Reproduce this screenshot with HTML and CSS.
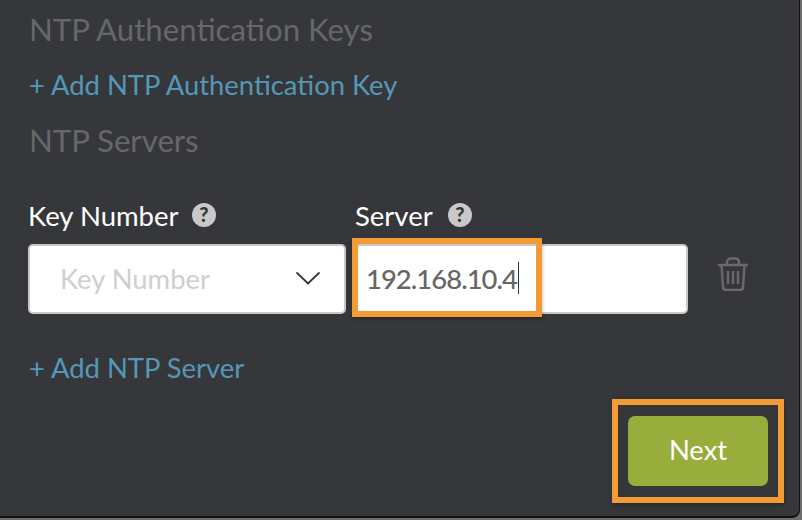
FILE: index.html
```html
<!DOCTYPE html>
<html lang="en">
<head>
<meta charset="utf-8">
<title>NTP Servers</title>
<link rel="stylesheet" href="styles.css">
</head>
<body>
<main class="window">
  <h2 class="section first">NTP Authentication Keys</h2>
  <a class="add add-key">+ Add NTP Authentication Key</a>
  <h2 class="section second">NTP Servers</h2>
  <div class="fields">
    <div class="field key-field">
      <div class="label"><span>Key Number</span>
        <svg class="help" viewBox="0 0 24 24"><circle cx="12" cy="12" r="12" fill="#c8c8c8"/><text x="12" y="18.500" text-anchor="middle" class="help-mark">?</text></svg>
      </div>
      <div class="box select"><span class="placeholder">Key Number</span>
        <svg class="chevron" viewBox="0 0 24 14"><path d="M.5 1.500 12 12.500 23.500 1.500" fill="none" stroke="#333" stroke-width="1.800"/></svg>
      </div>
    </div>
    <div class="field server-field">
      <div class="label"><span>Server</span>
        <svg class="help" viewBox="0 0 24 24"><circle cx="12" cy="12" r="12" fill="#c8c8c8"/><text x="12" y="18.500" text-anchor="middle" class="help-mark">?</text></svg>
      </div>
      <div class="box input"><span class="value">192.168.10.4</span><span class="caret"></span>
        <span class="highlight highlight-input"></span>
      </div>
    </div>
    <svg class="trash" viewBox="0 0 32 34" fill="none" stroke="#6a6a6a" stroke-width="2.400">
      <path d="M1 8H31M10 7V5.500C10 3 11.500 1.500 14 1.500H18C20.500 1.500 22 3 22 5.500V7"/>
      <path d="M4.500 8 6 30C6 31.800 7.200 33 9 33H23C24.800 33 26 31.800 26 30L27.500 8"/>
      <path d="M11 14V27M16 14V27M21 14V27"/>
    </svg>
  </div>
  <a class="add add-server">+ Add NTP Server</a>
  <div class="actions">
    <button class="next" type="button">Next<span class="highlight highlight-next"></span></button>
  </div>
</main>
</body>
</html>
```
FILE: styles.css
```css
* { box-sizing: border-box; }
html, body { margin: 0; height: 100%; }
body {
  width: 802px;
  height: 520px;
  overflow: hidden;
  background: #6e6e6e;
  font-family: Lato, "Open Sans", sans-serif;
}
.window {
  width: 800px;
  height: 518px;
  padding: 0 0 0 29px;
  background: #36373b;
  border-right: 1px solid #111;
  border-bottom: 2px solid #111;
  border-bottom-right-radius: 8px;
  overflow: hidden;
}
.section {
  margin: 0;
  font-size: 31.200px;
  line-height: 36px;
  font-weight: 400;
  color: #66676a;
}
.first { padding-top: 11px; height: 47px; }
.second { margin-top: 20px; }
.add {
  display: block;
  font-size: 27.400px;
  line-height: 34px;
  color: #5497b8;
}
.add-key { margin-top: 21px; }
.add-server { margin-top: 37px; }
.fields {
  display: flex;
  align-items: flex-end;
  margin-top: 39px;
  margin-left: -1px;
}
.field { display: flex; flex-direction: column; }
.key-field { width: 318px; }
.server-field { width: 334px; margin-left: 8px; }
.label {
  display: flex;
  align-items: center;
  gap: 13px;
  height: 36px;
  margin-left: 0;
  margin-bottom: 11px;
  font-size: 27.500px;
  color: #fff;
}
.server-field .label { margin-left: 1px; gap: 15px; }
.help { width: 24px; height: 24px; }
.help-mark {
  font: 900 20px Lato, sans-serif;
  fill: #36373b;
}
.box {
  position: relative;
  display: flex;
  align-items: center;
  height: 70px;
  padding-bottom: 2px;
  background: #fff;
  border: 2px solid #c8c8c8;
  border-radius: 5px;
  font-size: 27.400px;
}
.select { justify-content: space-between; padding-left: 30px; padding-right: 24px; }
.placeholder { color: #cfcfcf; }
.chevron { width: 24px; height: 14px; }
.input { padding-left: 10px; }
.value { color: #666; letter-spacing: -.95px; font-weight: 500; }
.caret { width: 1px; height: 32px; margin-left: 1px; background: #333; }
.highlight {
  position: absolute;
  border: 6px solid #f39b35;
  box-shadow: 0 2px 4px rgba(0, 0, 0, .3);
  pointer-events: none;
}
.highlight-input { left: -4px; top: -8px; width: 190px; height: 79px; }
.trash { width: 32px; height: 34px; margin: 0 0 23px 29px; }
.actions { display: flex; justify-content: flex-end; padding-right: 31px; margin-top: 31px; }
.next {
  position: relative;
  width: 140px;
  height: 70px;
  padding: 0 0 3px;
  border: 0;
  border-radius: 7px;
  background: #98ad3c;
  color: #fff;
  font: 400 27.400px Lato, sans-serif;
}
.highlight-next { left: -16px; top: -17px; width: 172px; height: 104px; }
```
